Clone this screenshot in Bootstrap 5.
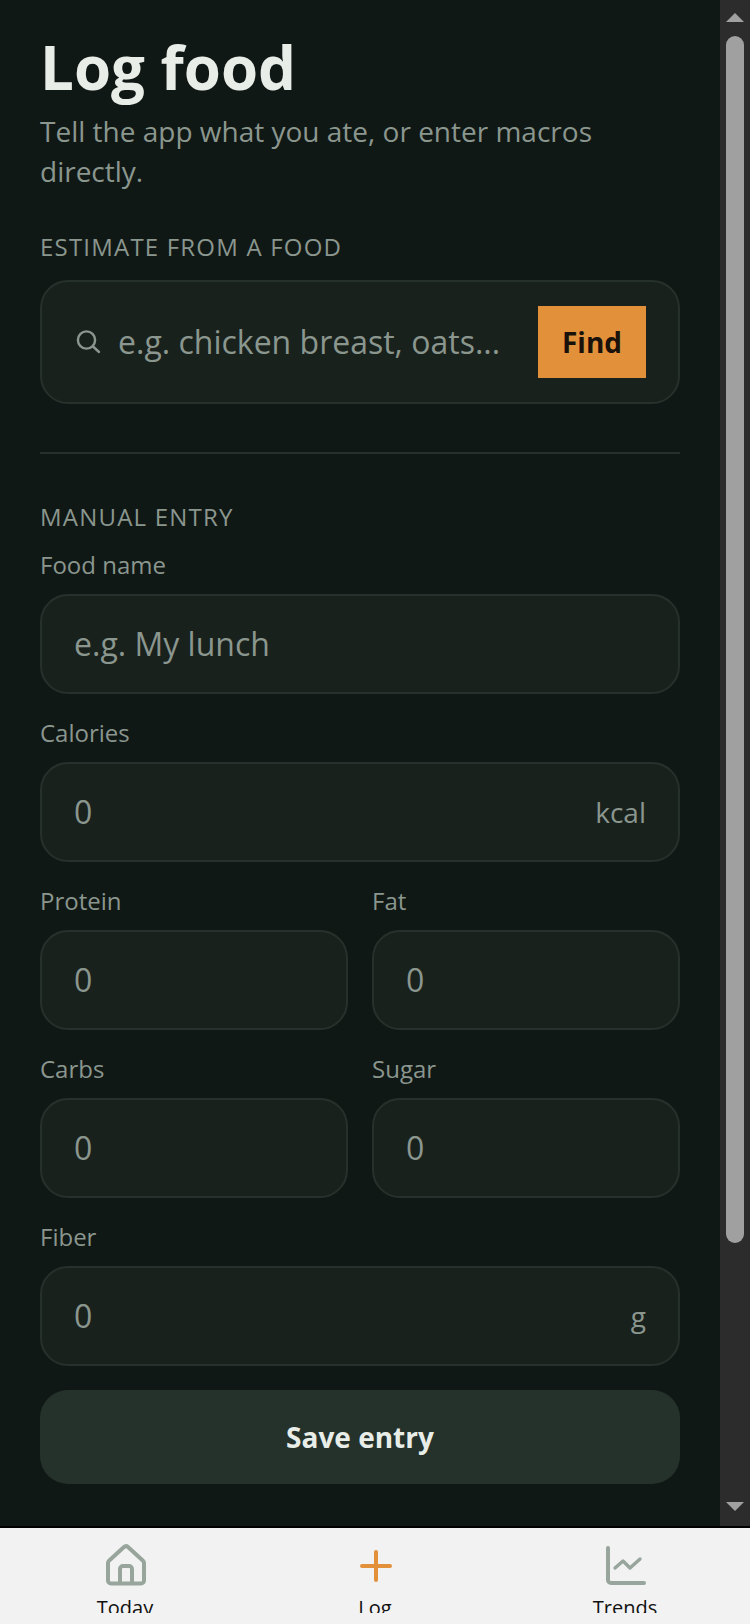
<!DOCTYPE html>
<html lang="en">
<head>
    <meta charset="UTF-8">
    <meta name="viewport" content="width=device-width, initial-scale=1.0">
    <title>Log food</title>
    <link href="https://cdn.jsdelivr.net/npm/bootstrap@5.3.0/dist/css/bootstrap.min.css" rel="stylesheet">
    <style>
        html, body { height: 100%; }
        body { background: #f2f2f2; font-family: "Open Sans", sans-serif; overflow: hidden; }
        .app-shell { height: 1624px; }
        .scroll-row { height: 1526px; background: #101815; }
        .log-page { width: 720px; padding: 0 40px; overflow: hidden; }
        .page-title { font-size: 60px; font-weight: 700; line-height: 72px; color: #e8ede8; margin: 31px 0 0; }
        .page-sub { font-size: 28px; line-height: 40px; color: #8a968e; margin: 8px 0 0; }
        .section-label { font-size: 24px; line-height: 32px; letter-spacing: 1.2px; color: #8a968e; text-transform: uppercase; }
        .sec-first { margin-top: 40px; }
        .field-box { background: #19211d; border: 2px solid #27312c; border-radius: 28px; color: #8a968e; }
        .search-box { height: 124px; margin-top: 17px; padding: 0 32px; }
        .box-text { font-size: 32px; line-height: 44px; color: #8a968e; }
        .search-text { margin-left: 16px; white-space: nowrap; }
        .find-btn { width: 108px; height: 72px; background: #e2913a; color: #1a120a; font-size: 28px; font-weight: 700; border: 0; border-radius: 0; padding: 0; }
        .divider { height: 2px; background: #27312c; margin: 48px 0 47px; }
        .field-label { display: block; font-size: 24px; line-height: 32px; color: #8a968e; margin: 0 0 13px; }
        .input-box { height: 100px; padding: 0 32px; }
        .unit { font-size: 28px; color: #8a968e; }
        .fields { row-gap: 23px; margin-top: 16px; }
        .pair { display: grid; grid-template-columns: 1fr 1fr; column-gap: 24px; }
        .save-btn { height: 94px; margin-top: 24px; border-radius: 28px; background: #25322b; color: #e8ede8; font-size: 28px; font-weight: 700; border: 0; width: 100%; }
        .fake-bar { width: 30px; background: #2c2c2c; padding: 13px 6px 15px; }
        .bar-up, .bar-down { width: 0; height: 0; border-left: 9px solid transparent; border-right: 9px solid transparent; }
        .bar-up { border-bottom: 9px solid #a0a0a0; margin-bottom: 14px; }
        .bar-down { border-top: 9px solid #a0a0a0; }
        .bar-thumb { height: 1207px; background: #a0a0a0; border-radius: 9px; }
        .tab-bar { height: 98px; background: #f2f2f2; border-top: 2px solid #000; }
        .tab-item { width: 250px; height: 85px; overflow: hidden; color: #111; font-size: 20px; line-height: 28px; padding-top: 15px; }
        .tab-item svg { display: block; margin-bottom: 7px; flex-shrink: 0; }
    </style>
</head>
<body>
    <div class="app-shell d-flex flex-column">
        <div class="scroll-row d-flex">
            <main class="log-page">
                <h1 class="page-title">Log food</h1>
                <p class="page-sub">Tell the app what you ate, or enter macros directly.</p>

                <div class="section-label sec-first">Estimate from a food</div>
                <div class="field-box search-box d-flex align-items-center">
                    <svg width="28" height="28" viewBox="0 0 28 28" fill="none" stroke="#8a968e" stroke-width="2.4" stroke-linecap="round">
                        <circle cx="12.5" cy="12" r="8.6"/><path d="M19 18.500l6 5.500"/>
                    </svg>
                    <span class="box-text search-text flex-grow-1">e.g. chicken breast, oats...</span>
                    <button type="button" class="btn find-btn">Find</button>
                </div>

                <div class="divider"></div>

                <div class="section-label">Manual entry</div>
                <div class="d-flex flex-column fields">
                    <div>
                        <label class="field-label">Food name</label>
                        <div class="field-box input-box d-flex align-items-center"><span class="box-text">e.g. My lunch</span></div>
                    </div>
                    <div>
                        <label class="field-label">Calories</label>
                        <div class="field-box input-box d-flex align-items-center justify-content-between"><span class="box-text">0</span><span class="unit">kcal</span></div>
                    </div>
                    <div class="pair">
                        <div>
                            <label class="field-label">Protein</label>
                            <div class="field-box input-box d-flex align-items-center"><span class="box-text">0</span></div>
                        </div>
                        <div>
                            <label class="field-label">Fat</label>
                            <div class="field-box input-box d-flex align-items-center"><span class="box-text">0</span></div>
                        </div>
                    </div>
                    <div class="pair">
                        <div>
                            <label class="field-label">Carbs</label>
                            <div class="field-box input-box d-flex align-items-center"><span class="box-text">0</span></div>
                        </div>
                        <div>
                            <label class="field-label">Sugar</label>
                            <div class="field-box input-box d-flex align-items-center"><span class="box-text">0</span></div>
                        </div>
                    </div>
                    <div>
                        <label class="field-label">Fiber</label>
                        <div class="field-box input-box d-flex align-items-center justify-content-between"><span class="box-text">0</span><span class="unit">g</span></div>
                    </div>
                </div>
                <button type="button" class="btn save-btn">Save entry</button>
            </main>
            <div class="fake-bar d-flex flex-column align-items-center">
                <div class="bar-up"></div>
                <div class="bar-thumb w-100"></div>
                <div class="bar-down mt-auto"></div>
            </div>
        </div>
        <nav class="tab-bar d-flex justify-content-between">
            <div class="tab-item d-flex flex-column align-items-center">
                <svg width="44" height="44" viewBox="0 0 44 44" fill="none" stroke="#98a59c" stroke-width="4" stroke-linejoin="round">
                    <path d="M5 20a3 3 0 0 1 1-2.200L21 4a3 3 0 0 1 4 0l15 13.800a3 3 0 0 1 1 2.200v17.500a3 3 0 0 1-3 3H8a3 3 0 0 1-3-3z"/><path d="M17 40V26a3 3 0 0 1 3-3h6a3 3 0 0 1 3 3v14"/>
                </svg>
                <span>Today</span>
            </div>
            <div class="tab-item d-flex flex-column align-items-center">
                <svg width="44" height="44" viewBox="0 0 44 44" fill="none" stroke="#e2913a" stroke-width="4" stroke-linecap="round">
                    <path d="M23 9v28M9 23h28"/>
                </svg>
                <span>Log</span>
            </div>
            <div class="tab-item d-flex flex-column align-items-center">
                <svg width="44" height="44" viewBox="0 0 44 44" fill="none" stroke="#98a59c" stroke-width="4" stroke-linecap="round" stroke-linejoin="round">
                    <path d="M5 5v32a3 3 0 0 0 3 3h33"/><path d="M12 25l8-7 7 7 10-9" stroke-width="3.400"/>
                </svg>
                <span>Trends</span>
            </div>
        </nav>
    </div>
    <script src="https://cdn.jsdelivr.net/npm/bootstrap@5.3.0/dist/js/bootstrap.bundle.min.js"></script>
</body>
</html>
